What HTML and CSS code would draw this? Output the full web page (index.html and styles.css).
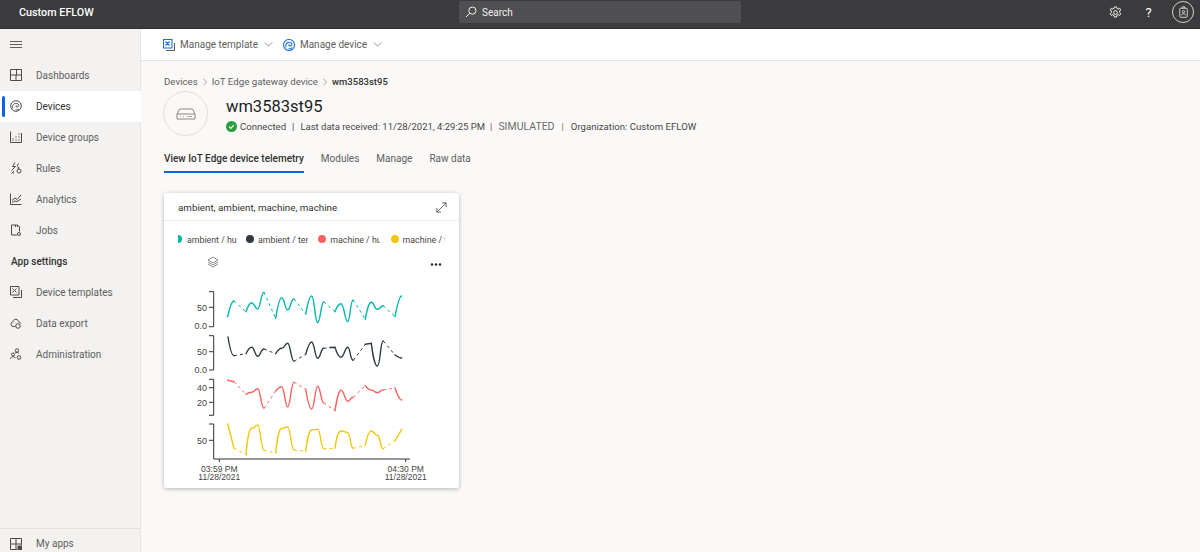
FILE: index.html
```html
<!DOCTYPE html>
<html lang="en">
<head>
    <meta charset="UTF-8">
    <title>Custom EFLOW</title>
    <link rel="stylesheet" href="styles.css">
</head>
<body>
<header class="top-bar">
    <div class="brand">Custom EFLOW</div>
    <div class="search">
        <svg class="search-icon" viewBox="0 0 12 12"><circle cx="7.4" cy="4.6" r="3.6"/><path d="M4.8 7.2 1 11"/></svg>
        <span>Search</span>
    </div>
    <div class="top-actions">
        <svg class="top-icon" viewBox="0 0 14 14"><circle cx="7" cy="7" r="2"/><path d="M5.8 1h2.4l.4 1.700 1.300.6 1.500-.9 1.200 1.900-1.200 1.200v1.400l1.300 1.200-1.200 2-1.600-.8-1.300.7-.4 1.900H5.800l-.4-1.900-1.300-.7-1.600.8-1.200-2 1.300-1.200V5.500L1.400 4.300l1.200-1.900 1.500.9 1.300-.6z"/></svg>
        <span class="help">?</span>
        <span class="avatar">
            <svg viewBox="0 0 12 16"><rect x="1" y="3" width="10" height="12" rx="1"/><path d="M4.500 3V1h3v2M3.500 12.500c.3-3 4.700-3 5 0"/><circle cx="6" cy="7.500" r="1.500"/></svg>
        </span>
    </div>
</header>
<div class="layout">
    <nav class="side">
        <div class="burger"><span></span><span></span><span></span></div>
        <a class="nav-item">
            <svg class="nav-icon" viewBox="0 0 12 12"><path d="M.5.500h11v11H.5zM.5 6h11M6 6v5.500M6.500.5V6"/></svg>Dashboards
        </a>
        <a class="nav-item active">
            <svg class="nav-icon" viewBox="0 0 12 12"><circle cx="6" cy="6" r="5.300"/><path d="M2.800 8.500c-1-3 1-5.500 3.700-5M6.500 3.500c3 0 3 3.500.5 3.500-1.500 0-1.500-1.500-.5-1.500M9 8.800c-1 1-2 1.200-3.500.9"/></svg>Devices
        </a>
        <a class="nav-item">
            <svg class="nav-icon" viewBox="0 0 12 12"><path d="M.5.500v11h11V2"/><path class="dots" d="M3 9.500V7.500M6 9.500V8M6 6.500V5M9 9.500V8M9 6.500V5M9 3.500V2"/></svg>Device groups
        </a>
        <a class="nav-item">
            <svg class="nav-icon" viewBox="0 0 12 12"><path d="M5 .5 2.500 4.500h3L1.500 8.500M8.500 1.500 7 4.500M2 10l2 1.500M4 9 1.500 11.500"/><circle cx="9" cy="9" r="2"/><circle cx="8.500" cy="6" r=".7"/></svg>Rules
        </a>
        <a class="nav-item">
            <svg class="nav-icon" viewBox="0 0 12 12"><path d="M.5 .5v11h11M2 7.500l3-2.500 2 1.500L11 2M2 9.500l3-1.500 2 .5 4-2.500"/></svg>Analytics
        </a>
        <a class="nav-item">
            <svg class="nav-icon" viewBox="0 0 12 12"><path d="M1.500 11V1h6l2 2v4.500M1.500 11h5.500M5.500 1v2M7.500 1v2"/><circle cx="9" cy="10" r="1.500"/></svg>Jobs
        </a>
        <div class="nav-head">App settings</div>
        <a class="nav-item">
            <svg class="nav-icon" viewBox="0 0 12 12"><path d="M.5 9V.5H9V9zM3 11.500h8.500V4M2.500 2.500l4 4M6.500 2.500l-4 4"/></svg>Device templates
        </a>
        <a class="nav-item">
            <svg class="nav-icon" viewBox="0 0 12 12"><path d="M5 9.500H3a2.300 2.300 0 0 1-.3-4.500C3 3 5 1.500 7 2.500c1 .5 1.500 1.300 1.700 2.300a2.300 2.300 0 0 1 2 1.700"/><circle cx="8" cy="9" r="2.300"/></svg>Data export
        </a>
        <a class="nav-item">
            <svg class="nav-icon" viewBox="0 0 12 12"><circle cx="7" cy="2.500" r="1.700"/><circle cx="3" cy="6.500" r="1.500"/><path d="M.5 11c0-2.500 4-3 5-1M5 5c1-1 3-1 4 .5"/><circle cx="9" cy="9.500" r="1.800"/></svg>Administration
        </a>
        <a class="nav-item my-apps">
            <svg class="nav-icon" viewBox="0 0 12 12"><path d="M.5.500h11V7M.5.500v11H7M.5 6h11M6 .5v11"/><rect class="fill" x="8" y="8" width="3.500" height="3.500"/></svg>My apps
        </a>
    </nav>
    <main class="content">
        <div class="toolbar">
            <button class="tool">
                <svg class="tool-icon" viewBox="0 0 12 12"><path d="M.5 9V.5H9V9zM2.500 2.500l4 4M6.500 2.500l-4 4"/><path class="back" d="M3 11.500h8.500V4"/></svg>
                Manage template
                <svg class="chevron" viewBox="0 0 10 6"><path d="M.5.500 5 5 9.500.5"/></svg>
            </button>
            <button class="tool">
                <svg class="tool-icon" viewBox="0 0 12 12"><circle cx="6" cy="6" r="5.500"/><path d="M3 8.500c-1-3 1-5.500 3.500-5M6.500 3.500c3 0 3 3.500.5 3.500-1.500 0-1.500-1.500-.5-1.500M9 8.500c-1 1.300-2 1.500-3.500 1.200"/></svg>
                Manage device
                <svg class="chevron" viewBox="0 0 10 6"><path d="M.5.500 5 5 9.500.5"/></svg>
            </button>
        </div>
        <div class="page">
            <div class="crumbs">
                <span>Devices</span>
                <svg class="crumb-sep" viewBox="0 0 5 9"><path d="M.5.500 4.500 4.500.5 8.500"/></svg>
                <span>IoT Edge gateway device</span>
                <svg class="crumb-sep" viewBox="0 0 5 9"><path d="M.5.500 4.500 4.500.5 8.500"/></svg>
                <b>wm3583st95</b>
            </div>
            <div class="device-head">
                <div class="device-pic">
                    <svg viewBox="0 0 20 12"><path d="M3.500 1h13L19 6v5H1V6zM1 6h18"/><path class="thin" d="M4 8.500h1M7 8.500h1M11 8.500h5"/></svg>
                </div>
                <div>
                    <h1 class="device-name">wm3583st95</h1>
                    <div class="status">
                        <svg class="ok" viewBox="0 0 12 12"><circle cx="6" cy="6" r="6"/><path d="M3.500 6.200 5.300 8l3.200-3.500"/></svg>
                        <span>Connected</span>
                        <span class="st-b">|</span>
                        <span class="st-c">Last data received: 11/28/2021, 4:29:25 PM</span>
                        <span class="st-d">|</span>
                        <span class="st-e">SIMULATED</span>
                        <span class="st-f">|</span>
                        <span>Organization: Custom EFLOW</span>
                    </div>
                </div>
            </div>
            <div class="tabs">
                <span class="tab current">View IoT Edge device telemetry</span>
                <span class="tab">Modules</span>
                <span class="tab">Manage</span>
                <span class="tab">Raw data</span>
            </div>
            <section class="card">
                <div class="card-title">
                    <span>ambient, ambient, machine, machine</span>
                    <svg class="expand" viewBox="0 0 12 12"><path d="M1 11 11 1M6.500 1H11v4.500M1 6.500V11h4.500"/></svg>
                </div>
                <div class="legend">
                    <div class="leg first"><i class="dot teal"></i><span>ambient / humidity</span></div>
                    <div class="leg"><i class="dot dark"></i><span>ambient / temperature</span></div>
                    <div class="leg"><i class="dot red"></i><span>machine / humidity</span></div>
                    <div class="leg last"><i class="dot yellow"></i><span>machine / temperature</span></div>
                </div>
                <svg class="chart" viewBox="164 250 295 238">
                    <g class="layers">
                        <path d="M213 257 218 260 213 263 208 260z"/>
                        <path d="M208 262 213 265 218 262M208 264 213 267 218 264"/>
                    </g>
                    <g class="more"><circle cx="432" cy="264.500" r="1.300"/><circle cx="436" cy="264.500" r="1.300"/><circle cx="440" cy="264.500" r="1.300"/></g>

                    <g class="axis">
                        <path d="M209 291.700h4.700V326.700H209M209 307.300h4.700"/>
                        <path d="M209 335.700h4.700V370H209M209 351.700h4.700"/>
                        <path d="M209 379.300h4.700V415.300H209M209 387.700h4.700M209 402.300h4.700"/>
                        <path d="M209 424h4.700V459M209 440.300h4.700"/>
                        <path d="M213.700 459H410M219.300 459v3M405.700 459v3"/>
                    </g>
                    <g class="tick-text">
                        <text x="207" y="310.500">50</text><text x="207" y="329">0.0</text>
                        <text x="207" y="355">50</text><text x="207" y="373">0.0</text>
                        <text x="207" y="391">40</text><text x="207" y="405.500">20</text>
                        <text x="207" y="443.500">50</text>
                    </g>
                    <g class="time-text">
                        <text x="219.300" y="471.500">03:59 PM</text><text x="219.300" y="480">11/28/2021</text>
                        <text x="405.700" y="471.500">04:30 PM</text><text x="405.700" y="480">11/28/2021</text>
                    </g>

                    <!-- solid runs, dashed where samples are missing -->
                    <g class="line c-teal">
                        <path d="M227.700 316.700S231 301 234 301"/>
                        <path d="M246 311.700S249 302.700 251.700 302.700S255 309 257.700 309S261 292.300 264 292.300"/>
                        <path d="M275.700 318.300S279 297.700 281.700 297.700S285 310 287.700 310S291 298.700 294 298.700"/>
                        <path d="M305.700 314S309 296 311.700 296S315 322.700 317.700 322.700S321 301.700 323.700 301.700"/>
                        <path d="M335 311.700S338 303.700 341 303.700S345 321.700 347.700 321.700S350 300 353.300 300"/>
                        <path d="M365.300 319.300S368 302.300 371.300 302.300S374 309.300 377.300 309.300S380 305.700 383.300 305.700"/>
                        <path d="M395 316.700S399 296 401.700 296"/>
                        <path class="gap" d="M234 301 246 311.700M264 292.300 275.700 318.300M294 298.700 305.700 314M323.700 301.700 335 311.700M353.300 300 365.300 319.300M383.300 305.700 395 316.700"/>
                    </g>
                    <g class="line c-dark">
                        <path d="M228 337S231 355.700 234 355.700"/>
                        <path d="M246 353.700S249 347.300 251.700 347.300S255 356.300 257.700 356.300S261 349 264 349"/>
                        <path d="M275.700 353.700S279 348.300 281.700 348.300S285 343.300 287.700 343.300S291 361.300 294 361.300"/>
                        <path d="M305.700 354.300S309 342 311.700 342S315 358.300 317.700 358.300S321 348.300 323.700 348.300"/>
                        <path d="M330 347.500 335 347.300S338 357.300 341 357.300S345 347.300 347.700 347.300S350 360.300 353.300 360.300"/>
                        <path d="M365.300 344.300 371.300 343.300S374 366 377.300 366S380 341 383.300 341"/>
                        <path d="M395 355S399 358 401.700 358"/>
                        <path class="gap" d="M234 355.700 246 353.700M264 349 275.700 353.700M294 361.300 305.700 354.300M323.700 348.300 330 347.500M353.300 360.300 365.300 344.300M383.300 341 395 355"/>
                    </g>
                    <g class="line c-red">
                        <path d="M227.700 380.300 234 381.700"/>
                        <path d="M246 394.300S249 392.300 251.700 392.300S255 388.700 257.700 388.700S261 408.300 264 408.300"/>
                        <path d="M275.700 391S279 386.700 281.700 386.700S285 407 287.700 407S291 382.300 294 382.300"/>
                        <path d="M305.700 389.300 S309 409 311.700 409S315 386.300 317.700 386.300S321 402.700 323.700 402.700"/>
                        <path d="M335 410.700S338 390.300 341 390.300S345 401.300 347.700 401.300S350 397.300 353.300 397.300"/>
                        <path d="M365.300 385.700S368 390 371.300 390S374 392.700 377.300 392.700S380 390 383.300 390"/>
                        <path d="M395 388S399 400 401.700 400"/>
                        <path class="gap" d="M234 381.700 246 394.300M264 408.300 275.700 391M294 382.300 305.700 389.300M323.700 402.700 335 410.700M353.300 397.300 365.300 385.700M383.300 390 395 388"/>
                    </g>
                    <g class="line c-yellow">
                        <path d="M227.700 424 234 448.300"/>
                        <path d="M246 454.700S248 428.300 251.700 428.300S255 425 257.700 425S261 450.300 264 450.300"/>
                        <path d="M275.700 453.300S278 428.300 281.700 428.300S285 427 287.700 427S291 450 294 450"/>
                        <path d="M305.700 451.300S308 430 311.700 430S315 429.300 317.700 429.300S321 448.700 323.700 448.700"/>
                        <path d="M335 448.300S337 431 341 431S345 432.700 347.700 432.700S350 448.300 353.300 448.300"/>
                        <path d="M365.300 445.300S368 431 371.300 431S374 435.300 377.300 435.300S380 448.700 383.300 448.700"/>
                        <path d="M395 440.700 401.700 429.300"/>
                        <path class="gap" d="M234 448.300 246 454.700M264 450.300 275.700 453.300M294 450 305.700 451.300M323.700 448.700 335 448.300M353.300 448.300 365.300 445.300M383.300 448.700 395 440.700"/>
                    </g>
                </svg>
            </section>
        </div>
    </main>
</div>
</body>
</html>
```

FILE: styles.css
```css
*{
    margin: 0;
    padding: 0;
    box-sizing: border-box;
}
html,body{
    height: 552px;
    overflow: hidden;
}
body{
    font-family: Roboto, "Open Sans", sans-serif;
    font-size: 10px;
    color: #323130;
    background: #faf9f8;
}
svg{
    display: block;
    fill: none;
    stroke: currentColor;
}

.top-bar{
    height: 29px;
    background: #3b3a3c;
    border-bottom: 1px solid #2f2e30;
    color: #fff;
    display: flex;
    align-items: center;
    padding: 0 6px 4px 19px;
}
.brand{
    font-size: 10.800px;
    font-weight: 500;
    width: 440px;
}
.search{
    width: 282px;
    height: 22px;
    background: #4f4e50;
    border-radius: 2px;
    display: flex;
    align-items: center;
    gap: 5px;
    padding-left: 6px;
    color: #f3f2f1;
}
.search-icon{
    width: 12px;
    height: 12px;
    stroke-width: 1;
}
.top-actions{
    margin-left: auto;
    display: flex;
    align-items: center;
}
.top-icon{
    width: 13px;
    height: 13px;
    stroke-width: 1;
}
.help{
    font-size: 13px;
    width: 13px;
    text-align: center;
    margin: 0 17px 0 20px;
}
.avatar{
    width: 22px;
    height: 22px;
    border: 1px solid #d2d0ce;
    border-radius: 50%;
    display: flex;
    align-items: center;
    justify-content: center;
}
.avatar svg{
    width: 9px;
    height: 12px;
    stroke-width: 1;
}

.layout{
    display: flex;
}
.side{
    width: 141px;
    height: 530px;
    flex: none;
    background: #f3f2f1;
    border-right: 1px solid #e6e4e2;
    color: #605e5c;
    display: flex;
    flex-direction: column;
}
.burger{
    height: 31px;
    padding: 12px 0 0 10px;
    display: flex;
    flex-direction: column;
    gap: 2px;
}
.burger span{
    width: 12px;
    height: 1px;
    background: #605e5c;
}
.nav-item{
    height: 31px;
    flex: none;
    display: flex;
    align-items: center;
    gap: 14px;
    padding: 0 0 1px 10px;
    position: relative;
}
.nav-icon{
    width: 12px;
    height: 12px;
    stroke-width: 1;
    flex: none;
    color: #4d4b49;
}
.nav-icon .fill{
    fill: currentColor;
}
.nav-icon .dots{
    stroke-dasharray: 1 .6;
    stroke-width: 1.300;
}
.nav-item.active{
    background: #fff;
    color: #323130;
    margin-right: -1px;
}
.nav-item.active::before{
    content: "";
    position: absolute;
    left: 2px;
    top: 5px;
    width: 2.500px;
    height: 21px;
    border-radius: 2px;
    background: #0f62e6;
}
.nav-head{
    height: 31px;
    flex: none;
    line-height: 31px;
    padding-left: 11px;
    font-weight: 500;
    color: #323130;
}
.my-apps{
    margin-top: auto;
    border-top: 1px solid #e1dfdd;
}

.content{
    flex: 1;
}
.toolbar{
    height: 32px;
    background: #fff;
    border-bottom: 1px solid #e6e4e2;
    display: flex;
    align-items: center;
    gap: 10px;
    padding: 0 0 0 22px;
}
.tool{
    border: 0;
    background: none;
    font: inherit;
    color: #605e5c;
    display: flex;
    align-items: center;
    gap: 5px;
}
.tool-icon{
    width: 12px;
    height: 12px;
    color: #1a6fe0;
    stroke-width: 1.100;
}
.tool-icon .back{
    stroke: #605e5c;
}
.chevron{
    width: 9px;
    height: 5px;
    stroke-width: .8;
    margin-left: 1px;
}

.page{
    padding: 13px 0 0 23px;
}
.crumbs{
    height: 15px;
    display: flex;
    align-items: center;
    gap: 5px;
    color: #605e5c;
    font-size: 9.700px;
}
.crumbs b{
    font-weight: 500;
    color: #323130;
    font-size: 9.500px;
}
.crumb-sep{
    width: 4px;
    height: 8px;
    stroke-width: .7;
}
.device-head{
    display: flex;
    gap: 18px;
    margin: 2px 0 0 -1px;
    align-items: center;
}
.device-pic{
    width: 45px;
    height: 45px;
    border-radius: 50%;
    border: 1px solid #e1dfdd;
    background: #faf9f8;
    display: flex;
    align-items: center;
    justify-content: center;
    color: #8a8886;
}
.device-pic svg{
    width: 20px;
    height: 12px;
    stroke-width: 1;
}
.device-pic .thin{
    stroke-width: .7;
}
.device-name{
    font-size: 16.500px;
    font-weight: 400;
    color: #201f1e;
    line-height: 22px;
    padding-top: 2px;
}
.status{
    display: flex;
    align-items: center;
    color: #484644;
    line-height: 14px;
    margin-top: 2px;
    font-size: 9.600px;
}
.ok{
    width: 11px;
    height: 11px;
    fill: #2a9d3f;
    stroke: none;
    margin-right: 3px;
}
.ok path{
    fill: none;
    stroke: #fff;
    stroke-width: 1.300;
}
.st-b{
    margin: 0 6px;
}
.st-c{
    font-size: 9.500px;
}
.st-d{
    margin: 0 6px 0 5px;
    color: #9c4a3c;
}
.st-e{
    font-size: 10.500px;
    color: #6d6b69;
}
.st-f{
    margin: 0 7px;
    color: #8a6a3c;
}
.tabs{
    display: flex;
    gap: 17px;
    margin-top: 15px;
    color: #605e5c;
}
.tab{
    height: 22px;
    line-height: 16px;
}
.tab.current{
    color: #323130;
    font-weight: 500;
    border-bottom: 2px solid #0f62e6;
}

.card{
    width: 295px;
    height: 295px;
    margin-top: 20px;
    background: #fff;
    border-radius: 2px;
    box-shadow: 0 1px 4px rgba(0,0,0,.28);
    overflow: hidden;
}
.card-title{
    height: 28px;
    border-bottom: 1px solid #edebe9;
    display: flex;
    align-items: center;
    justify-content: space-between;
    padding: 1px 12px 0 14px;
    font-size: 9.800px;
    color: #323130;
}
.expand{
    width: 11px;
    height: 11px;
    stroke-width: .8;
}
.legend{
    height: 29px;
    display: flex;
    padding: 12px 0 0 14px;
    color: #484644;
    font-size: 8.800px;
}
.leg{
    width: 72.300px;
    flex: none;
    display: flex;
    align-items: center;
    height: 14px;
    gap: 4px;
    overflow: hidden;
}
.leg span{
    width: 50px;
    flex: none;
    white-space: nowrap;
    overflow: hidden;
}
.leg.first{
    width: 59px;
}
.leg.first .dot{
    width: 4px;
    border-radius: 0 4px 4px 0;
    margin-right: 1px;
}
.leg.first + .leg{
    margin-left: 9px;
}
.leg.last span{
    width: 42px;
}
.dot{
    width: 8px;
    height: 8px;
    border-radius: 50%;
    flex: none;
    margin-top: -2px;
}
.teal{
    background: #01b8aa;
}
.dark{
    background: #2f3b40;
}
.red{
    background: #fd625e;
}
.yellow{
    background: #f2c80f;
}
.chart{
    width: 295px;
    height: 238px;
}
.layers{
    stroke: #605e5c;
    stroke-width: .7;
}
.more{
    fill: #323130;
    stroke: none;
}
.axis{
    stroke: #333;
    stroke-width: 1;
}
.tick-text text,.time-text text{
    font-family: "Liberation Sans", Arial, sans-serif;
    fill: #444;
    stroke: none;
}
.tick-text text{
    font-size: 9px;
    text-anchor: end;
}
.time-text text{
    font-size: 8.500px;
    text-anchor: middle;
}
.line path{
    stroke-width: 1.400;
    stroke-linecap: round;
}
.line .gap{
    stroke-width: 1;
    stroke-dasharray: 3 3;
    stroke-linecap: butt;
}
.c-teal{
    stroke: #01b8aa;
}
.c-dark{
    stroke: #2f3b40;
}
.c-red{
    stroke: #fd625e;
}
.c-yellow{
    stroke: #f2c80f;
}
```
